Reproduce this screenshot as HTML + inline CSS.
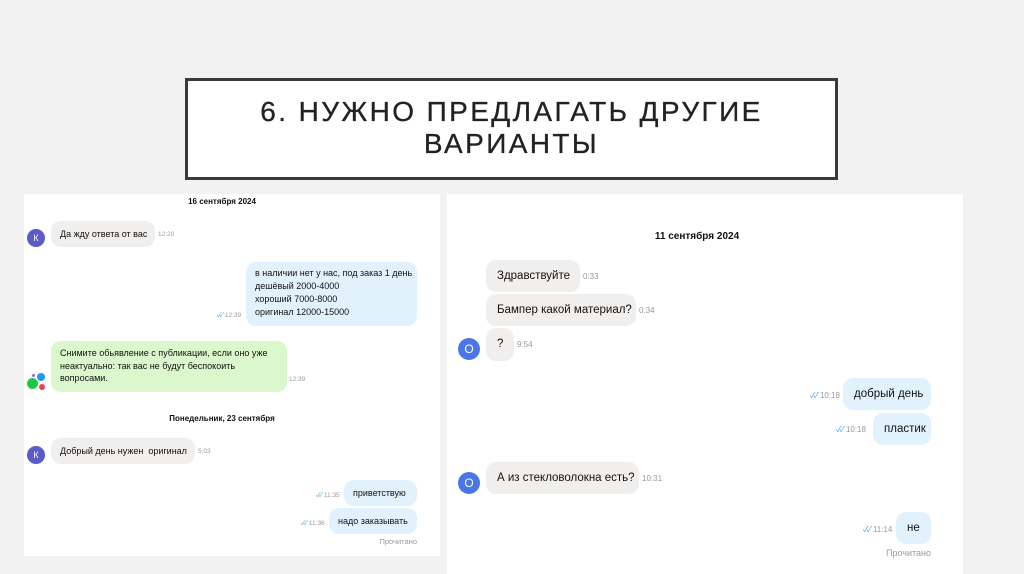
<!DOCTYPE html>
<html><head><meta charset="utf-8"><style>
*{margin:0;padding:0;box-sizing:border-box}
body{width:1024px;height:574px;background:#f2f2f2;position:relative;overflow:hidden;font-family:"Liberation Sans","Noto Sans CJK SC",sans-serif;color:#111}
.a{position:absolute}
.title{left:185px;top:78px;width:653px;height:102px;border:3px solid #3a3a3a;background:#fff;text-align:center;font-size:28px;letter-spacing:2.4px;line-height:32px;padding-top:15px;color:#222;-webkit-text-stroke:0.3px #222}
.panel{background:#fff}
.b{position:absolute;border-radius:10px;background:#f1efed;white-space:nowrap}
.L .b{font-size:9px;padding:0 9px;line-height:26px}
.R .b{font-size:11.5px;padding:0 11px;line-height:32px}
.blue{background:#e2f2fd !important}
.t{position:absolute;color:#999;white-space:nowrap}
.L .t{font-size:6.5px}
.R .t{font-size:8px}
.ck{color:#4aa8dd;letter-spacing:-2px;margin-right:3px}
.d{position:absolute;font-weight:bold;white-space:nowrap;transform:translateX(-50%)}
.av{position:absolute;border-radius:50%;color:#fff;text-align:center}
</style></head><body>
<div class="a title">6. НУЖНО ПРЕДЛАГАТЬ ДРУГИЕ<br>ВАРИАНТЫ</div>

<div class="a panel L" style="left:24px;top:194px;width:416px;height:362px"></div>
<div class="L">
<div class="d" style="left:222px;top:197px;font-size:8px">16 сентября 2024</div>
<div class="av" style="left:27px;top:229px;width:18px;height:18px;background:#5a5bc6;font-size:9px;line-height:18px">К</div>
<div class="b" style="left:51px;top:221px;width:104px">Да жду ответа от вас</div>
<div class="t" style="left:158px;top:231px">12:20</div>
<div class="b blue" style="left:246px;top:262px;width:171px;height:64px;line-height:13px;padding-top:5px">в наличии нет у нас, под заказ 1 день<br>дешёвый 2000-4000<br>хороший 7000-8000<br>оригинал 12000-15000</div>
<div class="t" style="left:217px;top:309px"><span class="ck">✓✓</span>12:39</div>
<div class="b" style="left:51px;top:341px;width:236px;height:51px;background:#dbf7cc;line-height:12.5px;padding-top:6px;white-space:normal">Снимите обьявление с публикации, если оно уже неактуально: так вас не будут беспокоить вопросами.</div>
<div class="t" style="left:289px;top:376px">12:39</div>
<div class="av" style="left:37px;top:373px;width:8px;height:8px;background:#1e9bf0"></div>
<div class="av" style="left:32px;top:374px;width:3px;height:3px;background:#a05cf0"></div>
<div class="av" style="left:27px;top:378px;width:11px;height:11px;background:#1fc64a"></div>
<div class="av" style="left:39px;top:384px;width:6px;height:6px;background:#f0404e"></div>
<div class="d" style="left:222px;top:414px;font-size:8px">Понедельник, 23 сентября</div>
<div class="av" style="left:27px;top:446px;width:18px;height:18px;background:#5a5bc6;font-size:9px;line-height:18px">К</div>
<div class="b" style="left:51px;top:438px;width:144px">Добрый день нужен&nbsp; оригинал</div>
<div class="t" style="left:198px;top:448px">5:03</div>
<div class="b blue" style="left:344px;top:480px;width:73px">приветствую</div>
<div class="t" style="left:316px;top:489px"><span class="ck">✓✓</span>11:35</div>
<div class="b blue" style="left:329px;top:508px;width:88px">надо заказывать</div>
<div class="t" style="left:301px;top:517px"><span class="ck">✓✓</span>11:36</div>
<div class="t" style="right:607px;top:537px;font-size:7.5px">Прочитано</div>
</div>

<div class="a panel" style="left:447px;top:194px;width:516px;height:380px"></div>
<div class="R">
<div class="d" style="left:697px;top:231px;font-size:10px">11 сентября 2024</div>
<div class="b" style="left:486px;top:260px;width:94px">Здравствуйте</div>
<div class="t" style="left:583px;top:272px">0:33</div>
<div class="b" style="left:486px;top:294px;width:150px">Бампер какой материал?</div>
<div class="t" style="left:639px;top:306px">0:34</div>
<div class="b" style="left:486px;top:328px;width:28px;height:33px">?</div>
<div class="t" style="left:517px;top:340px">9:54</div>
<div class="av" style="left:458px;top:338px;width:22px;height:22px;background:#4a76e8;font-size:12px;line-height:22px">О</div>
<div class="b blue" style="left:843px;top:378px;width:88px">добрый день</div>
<div class="t" style="left:810px;top:390px"><span class="ck">✓✓</span>10:18</div>
<div class="b blue" style="left:873px;top:413px;width:58px">пластик</div>
<div class="t" style="left:836px;top:424px"><span class="ck">✓✓</span>10:18</div>
<div class="av" style="left:458px;top:472px;width:22px;height:22px;background:#4a76e8;font-size:12px;line-height:22px">О</div>
<div class="b" style="left:486px;top:462px;width:153px">А из стекловолокна есть?</div>
<div class="t" style="left:642px;top:474px">10:31</div>
<div class="b blue" style="left:896px;top:512px;width:35px">не</div>
<div class="t" style="left:863px;top:524px"><span class="ck">✓✓</span>11:14</div>
<div class="t" style="right:93px;top:548px;font-size:9px">Прочитано</div>
</div>
</body></html>
